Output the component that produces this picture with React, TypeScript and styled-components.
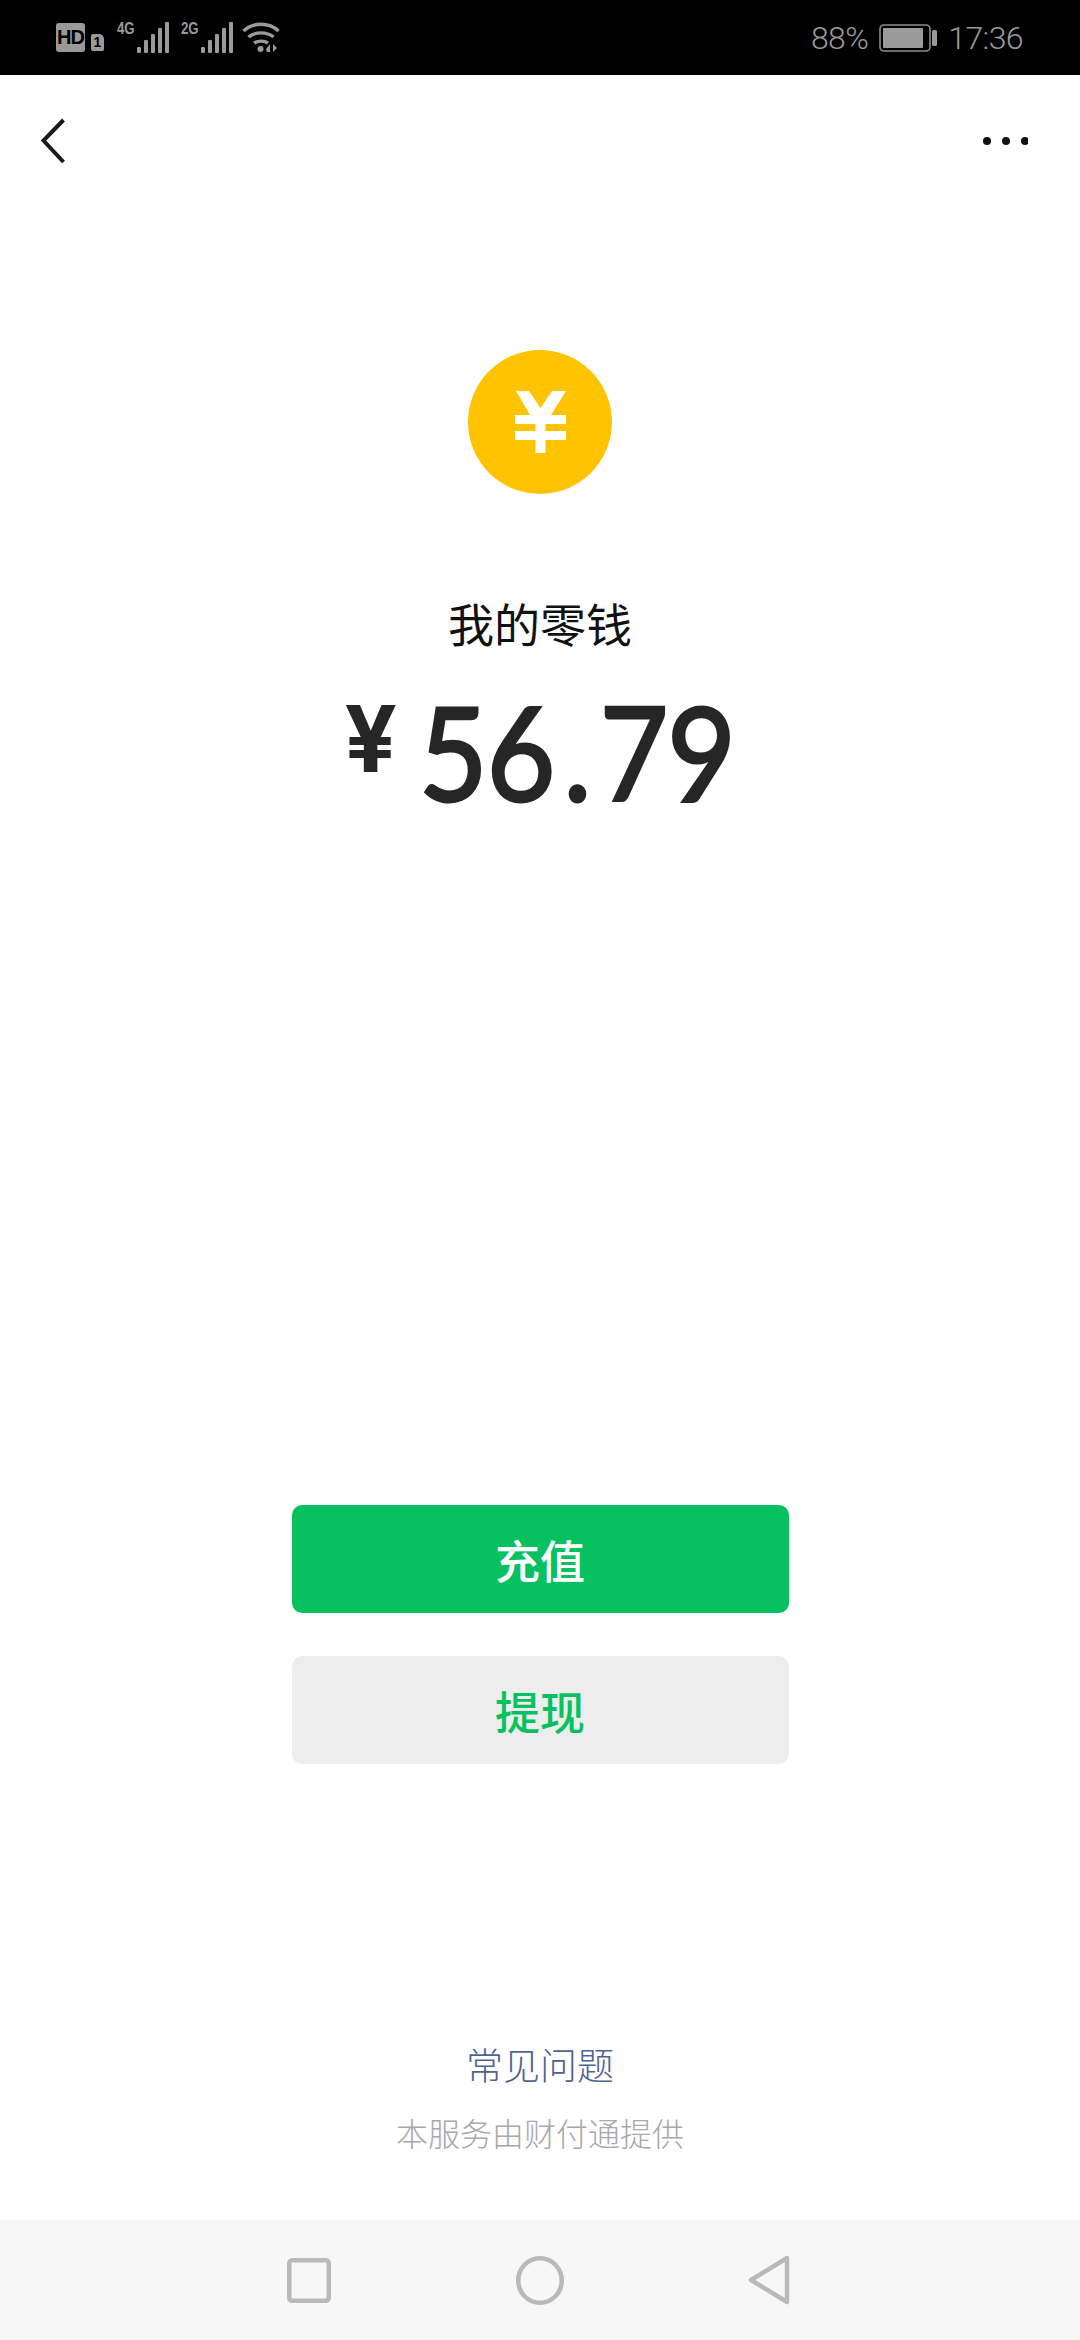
import styled, { createGlobalStyle } from "styled-components";

const GlobalStyle = createGlobalStyle`
    html, body {
        margin: 0;
        padding: 0;
        background: #fff;
    }
    * {
        box-sizing: border-box;
    }
`;

const cjk = `"Noto Sans CJK SC", "Noto Sans", sans-serif`;

const App = () => {
    return (
        <>
            <GlobalStyle />
            <Page>
                <StatusBar>
                    <StatusLeft>
                        <HdBadge>HD</HdBadge>
                        <SimBadge>1</SimBadge>
                        <Signal>
                            <NetLabel>4G</NetLabel>
                            <SignalBars />
                        </Signal>
                        <Signal>
                            <NetLabel>2G</NetLabel>
                            <SignalBars />
                        </Signal>
                        <WifiIcon />
                    </StatusLeft>
                    <StatusRight>
                        <StatusText>88%</StatusText>
                        <BatteryIcon />
                        <StatusText>17:36</StatusText>
                    </StatusRight>
                </StatusBar>

                <NavBar>
                    <svg width="26" height="46" viewBox="0 0 26 46">
                        <path d="M23.5 2 L3.5 22.5 L23.5 44" fill="none" stroke="#1a1a1a" strokeWidth="4" />
                    </svg>
                    <svg width="46" height="10" viewBox="0 0 46 10">
                        <circle cx="5" cy="5" r="4" fill="#111" />
                        <circle cx="24" cy="5" r="4" fill="#111" />
                        <circle cx="43" cy="5" r="4" fill="#111" />
                    </svg>
                </NavBar>

                <Hero>
                    <Coin>
                        <svg width="51" height="62" viewBox="0 0 51 62">
                            <path
                                d="M1 0 H14 L25.5 17 L37 0 H51 L36 24 H51 V33 H30.5 V40 H51 V49 H30.5 V62 H20.5 V49 H0 V40 H20.5 V33 H0 V24 H15 Z"
                                fill="#fff"
                            />
                        </svg>
                    </Coin>
                    <Title>我的零钱</Title>
                    <Amount>
                        <Currency>¥</Currency>
                        <Digits>
                            56<Dot>.</Dot>79
                        </Digits>
                    </Amount>
                </Hero>

                <Actions>
                    <ActionButton $primary>充值</ActionButton>
                    <ActionButton>提现</ActionButton>
                </Actions>

                <Footer>
                    <FaqLink>常见问题</FaqLink>
                    <Provider>本服务由财付通提供</Provider>
                </Footer>

                <SystemNav>
                    <svg width="44" height="45" viewBox="0 0 44 45">
                        <rect x="2.25" y="2.25" width="39.5" height="40.5" rx="3" fill="none" stroke="#b9b9b9" strokeWidth="4.5" />
                    </svg>
                    <svg width="48" height="49" viewBox="0 0 48 49">
                        <ellipse cx="24" cy="24.5" rx="21.75" ry="22.25" fill="none" stroke="#b9b9b9" strokeWidth="4.5" />
                    </svg>
                    <svg width="42" height="50" viewBox="0 0 42 50">
                        <path d="M39 3 L3 25 L39 47 Z" fill="none" stroke="#b9b9b9" strokeWidth="4.5" strokeLinejoin="round" />
                    </svg>
                </SystemNav>
            </Page>
        </>
    );
};

const SignalBars = () => (
    <svg width="32" height="31" viewBox="0 0 32 31">
        <rect x="0" y="25" width="4" height="6" rx="1" fill="#9a9a9a" />
        <rect x="7" y="18" width="4" height="13" rx="1" fill="#9a9a9a" />
        <rect x="14" y="12" width="4" height="19" rx="1" fill="#9a9a9a" />
        <rect x="21" y="6" width="4" height="25" rx="1" fill="#9a9a9a" />
        <rect x="28" y="0" width="4" height="31" rx="1" fill="#9a9a9a" />
    </svg>
);

const WifiIcon = () => (
    <svg width="38" height="31" viewBox="0 0 38 31">
        <g fill="none" stroke="#9a9a9a" strokeWidth="3.4">
            <path d="M1.5 9 C11 0 27 0 36.5 9" />
            <path d="M6.5 15 C13 9.5 25 9.5 31.5 15" />
            <path d="M12 21 C15.5 18.5 22.5 18.5 26 21" />
        </g>
        <circle cx="18.5" cy="27" r="3" fill="#9a9a9a" />
        <path d="M28 22 V30 H25 L24 27 Z M31 22 L35 26 L31 30 Z" fill="#9a9a9a" />
    </svg>
);

const BatteryIcon = () => (
    <svg width="58" height="28" viewBox="0 0 58 28">
        <rect x="1" y="1" width="50" height="26" rx="4" fill="none" stroke="#8c8c8c" strokeWidth="1.6" />
        <rect x="4" y="4" width="40" height="20" rx="1" fill="#9a9a9a" />
        <rect x="53" y="6" width="5" height="16" rx="1.5" fill="#9a9a9a" />
    </svg>
);

const Page = styled.div`
    display: flex;
    flex-direction: column;
    width: 1080px;
    height: 2340px;
    background: #fff;
    overflow: hidden;
`;

const StatusBar = styled.div`
    display: flex;
    align-items: center;
    justify-content: space-between;
    flex: none;
    height: 75px;
    padding: 0 57px 0 56px;
    background: #000;
`;

const StatusLeft = styled.div`
    display: flex;
    align-items: center;
    gap: 6px;
    svg:last-child {
        margin-left: 3px;
    }
`;

const HdBadge = styled.div`
    width: 29px;
    height: 29px;
    border-radius: 3px;
    background: #9a9a9a;
    color: #000;
    font: 700 20px/29px "Liberation Sans", sans-serif;
    letter-spacing: -1px;
    text-align: center;
`;

const SimBadge = styled.div`
    width: 13px;
    height: 17px;
    margin: 9px 1px 0 0;
    border-radius: 2px 5px 2px 2px;
    background: #9a9a9a;
    color: #000;
    font: 700 14px/17px "Liberation Sans", sans-serif;
    text-align: center;
`;

const Signal = styled.div`
    display: flex;
    align-items: flex-start;
    margin-left: 6px;
`;

const NetLabel = styled.span`
    width: 17px;
    margin-top: -2px;
    color: #9a9a9a;
    font: 700 17px/18px "Liberation Sans", sans-serif;
    white-space: nowrap;
    transform: scaleX(0.78);
    transform-origin: left top;
`;

const StatusRight = styled.div`
    display: flex;
    align-items: center;
    gap: 11px;
`;

const StatusText = styled.span`
    color: #9a9a9a;
    font: 300 32px/40px Roboto, sans-serif;
    letter-spacing: -0.6px;
`;

const NavBar = styled.div`
    display: flex;
    align-items: center;
    justify-content: space-between;
    flex: none;
    height: 132px;
    padding: 0 52px 0 40px;
`;

const Hero = styled.div`
    display: flex;
    flex-direction: column;
    align-items: center;
    padding-top: 143px;
`;

const Coin = styled.div`
    display: flex;
    align-items: center;
    justify-content: center;
    width: 144px;
    height: 144px;
    border-radius: 50%;
    background: #ffc300;
`;

const Title = styled.div`
    margin-top: 98px;
    color: #111;
    font: 400 46px/60px ${cjk};
`;

const Amount = styled.div`
    display: flex;
    align-items: flex-start;
    gap: 22px;
    margin-top: 29px;
    color: #262626;
`;

const Currency = styled.span`
    margin-top: 14px;
    font: 700 92px/88px Inter, sans-serif;
`;

/* Lato only comes in regular and bold here, the stroke gives the weight between them */
const Digits = styled.span`
    margin-right: -31px;
    font: 400 130px/140px Lato, sans-serif;
    font-kerning: none;
    letter-spacing: -1px;
    -webkit-text-stroke: 3px #262626;
    transform: scaleX(0.91);
    transform-origin: left center;
`;

const Dot = styled.span`
    margin: 0 10px;
`;

const Actions = styled.div`
    display: flex;
    flex-direction: column;
    align-items: center;
    gap: 43px;
    margin-top: auto;
`;

const ActionButton = styled.button<{ $primary?: boolean }>`
    width: 497px;
    height: 108px;
    border: 0;
    border-radius: 10px;
    background: ${p => (p.$primary ? "#07c160" : "#ededed")};
    color: ${p => (p.$primary ? "#fff" : "#07c160")};
    font: 500 45px/108px ${cjk};
    text-align: center;
`;

const Footer = styled.div`
    display: flex;
    flex-direction: column;
    align-items: center;
    flex: none;
    margin-top: 277px;
    padding-bottom: 68px;
`;

const FaqLink = styled.div`
    color: #4f6390;
    font: 300 37px/46px ${cjk};
`;

const Provider = styled.div`
    margin-top: 25px;
    color: #a8a8a8;
    font: 300 32px/40px ${cjk};
`;

const SystemNav = styled.div`
    display: flex;
    align-items: center;
    justify-content: space-between;
    flex: none;
    height: 120px;
    padding: 0 290px 0 287px;
    background: #f7f7f7;
`;

export default App;
